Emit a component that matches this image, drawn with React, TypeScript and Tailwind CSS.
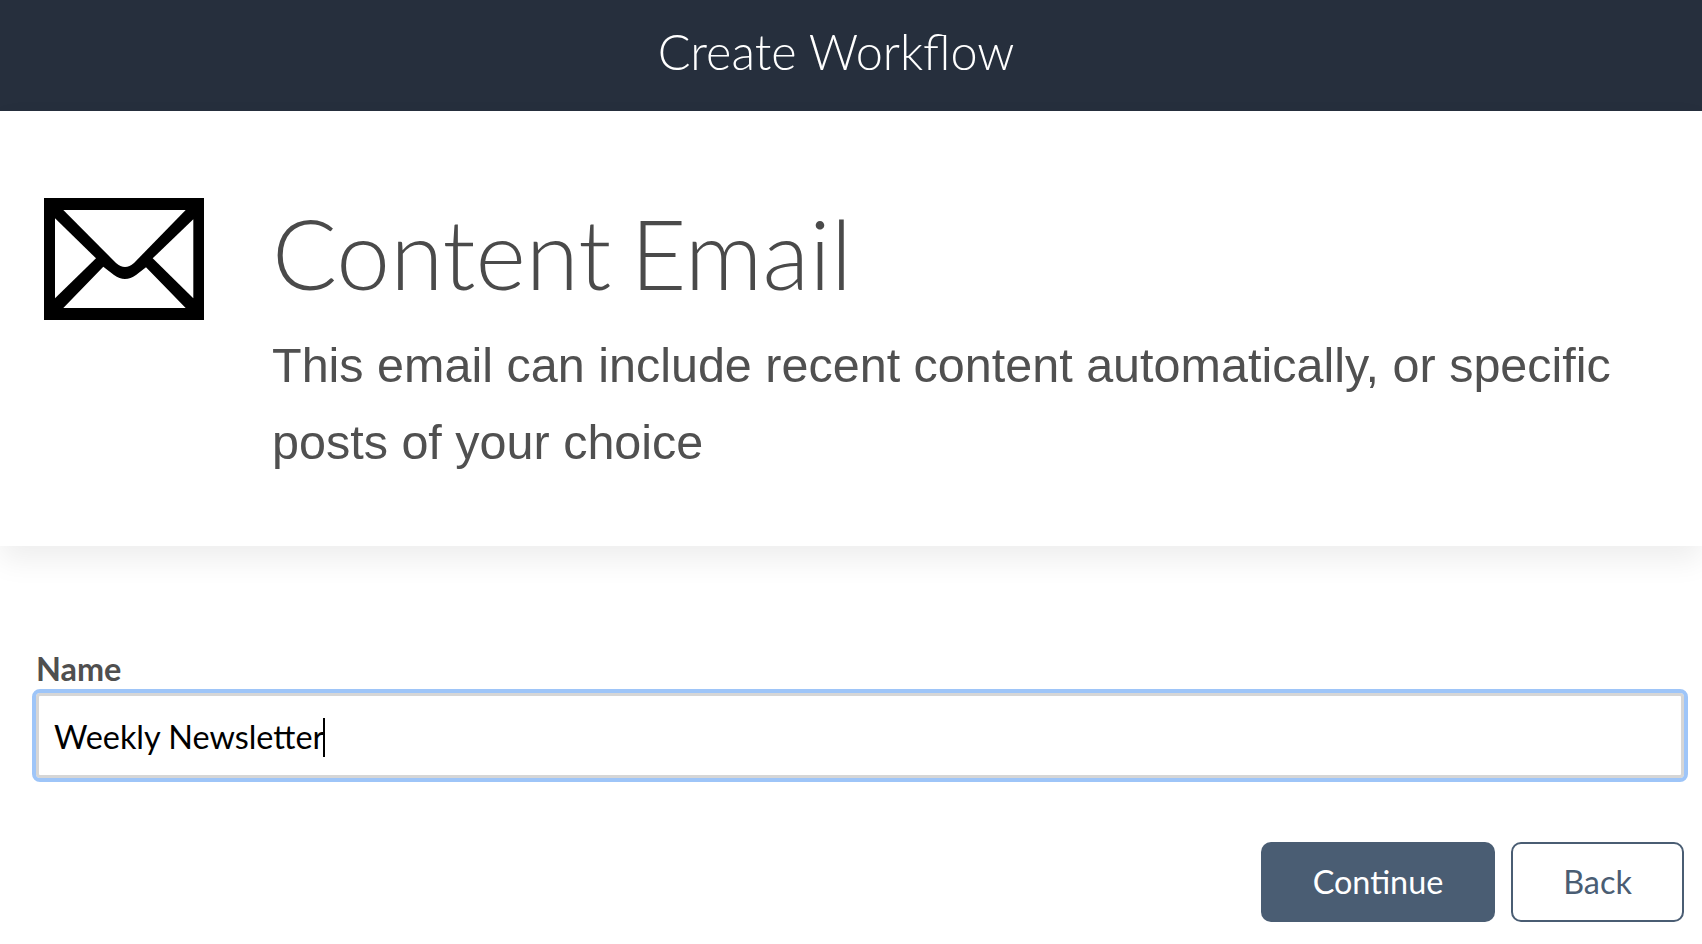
import React from "react";

const lato = "font-['Lato','Noto_Sans',sans-serif]";

const EnvelopeIcon = () => (
  <svg width="160" height="122" viewBox="0 0 160 122" className="shrink-0">
    <rect width="160" height="122" fill="#000" />
    {/* flap, side panels and bottom panel */}
    <path d="M19.3 12H141.7L90 65Q81 73 72 65Z" fill="#fff" />
    <path d="M11 20.3V100.3L52 60.3Z" fill="#fff" />
    <path d="M149.3 21.3V100.3L108.7 60.3Z" fill="#fff" />
    <path d="M19.3 110H141.7L102 69.3L92 77Q81 85 70 77L59.3 68.7Z" fill="#fff" />
  </svg>
);

export default function App() {
  return (
    <div className={`min-h-[944px] bg-white ${lato}`}>
      <header className="flex h-[111px] items-center justify-center bg-[#262f3d] pb-[8px] pr-[30px]">
        <h1 className="text-[48.6px] font-light leading-none text-white">Create Workflow</h1>
      </header>

      <section className="flex h-[435px] items-start bg-white pl-[44px] pt-[87px] shadow-[0_14px_28px_rgba(0,0,0,0.07)]">
        <EnvelopeIcon />
        <div className="ml-[68px]">
          <h2 className="text-[96.5px] font-light leading-[110px] text-[#4a4a4a] [word-spacing:-7px]">Content Email</h2>
          <p className="mt-[19px] w-[1370px] font-['Liberation_Sans',Arial,sans-serif] text-[48.5px] leading-[77px] text-[#505050]">
            This email can include recent content automatically, or specific posts of your choice
          </p>
        </div>
      </section>

      <form className="flex flex-col pl-[32px] pr-[14px] pt-[104px]">
        <label className="pl-[4px] text-[32.4px] font-bold leading-[38px] text-[#4f4f4f]">Name</label>
        <div className="mt-[1px] flex h-[93px] items-center rounded-[8px] border-[4px] border-[#9ec5f8] bg-white pl-[18px] pt-[4px] shadow-[inset_0_0_0_3px_#d6d6d6]">
          <span className="text-[32.4px] leading-none text-black">Weekly Newsletter</span>
          <span className="ml-[-1px] h-[39px] w-[2px] bg-black" />
        </div>
        <div className="mt-[60px] flex justify-end gap-[16px] pr-[4px]">
          <button type="button" className="h-[80px] w-[234px] rounded-[10px] bg-[#4a5d73] text-[32.4px] text-white">
            Continue
          </button>
          <button type="button" className="h-[80px] w-[173px] rounded-[10px] border-[2px] border-[#4a5d73] bg-white text-[32.4px] text-[#4a5d73]">
            Back
          </button>
        </div>
      </form>
    </div>
  );
}
